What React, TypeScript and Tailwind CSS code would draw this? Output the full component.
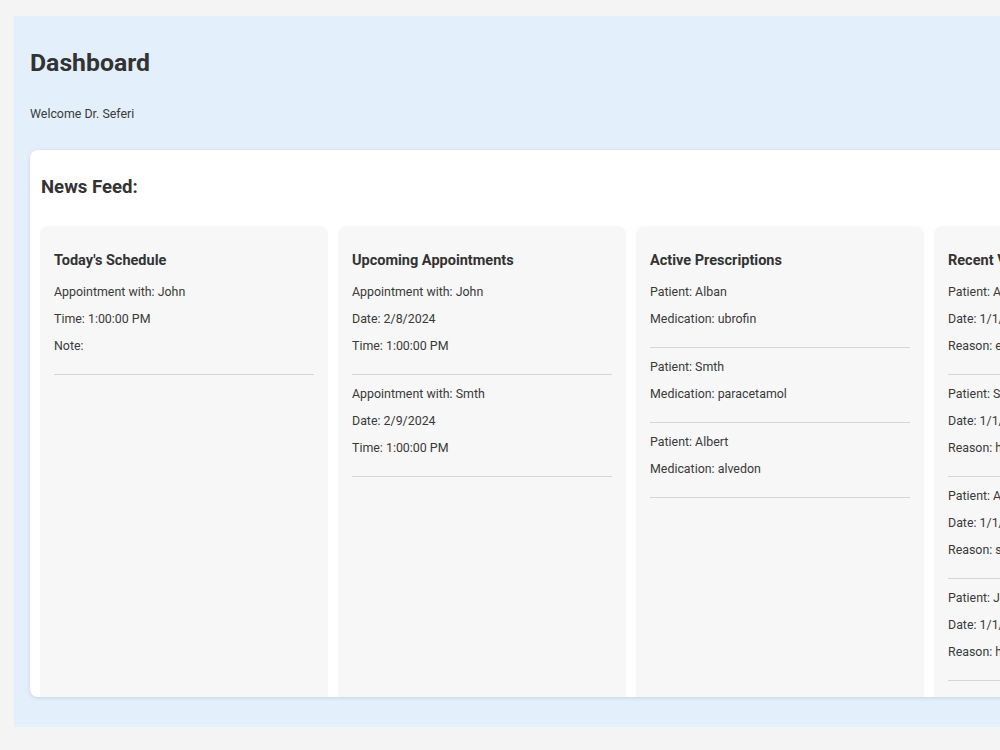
import React from "react";

type Card = { title: string; items: string[][] };

const cards: Card[] = [
  {
    title: "Today's Schedule",
    items: [["Appointment with: John", "Time: 1:00:00 PM", "Note:"]],
  },
  {
    title: "Upcoming Appointments",
    items: [
      ["Appointment with: John", "Date: 2/8/2024", "Time: 1:00:00 PM"],
      ["Appointment with: Smth", "Date: 2/9/2024", "Time: 1:00:00 PM"],
    ],
  },
  {
    title: "Active Prescriptions",
    items: [
      ["Patient: Alban", "Medication: ubrofin"],
      ["Patient: Smth", "Medication: paracetamol"],
      ["Patient: Albert", "Medication: alvedon"],
    ],
  },
  {
    title: "Recent Visits",
    items: [
      ["Patient: Alban", "Date: 1/1/2024", "Reason: examination"],
      ["Patient: Smth", "Date: 1/1/2024", "Reason: headache"],
      ["Patient: Albert", "Date: 1/1/2024", "Reason: sore throat"],
      ["Patient: John", "Date: 1/1/2024", "Reason: headache"],
    ],
  },
];

export default function App() {
  return (
    <div
      className="w-[1000px] h-[750px] overflow-hidden bg-[#f4f4f4] text-[#333333]"
      style={{ fontFamily: "Roboto, 'Noto Sans', sans-serif" }}
    >
      <div className="ml-[14px] mt-[16px] w-[1300px] h-[711px] bg-[#e3f0fc] pl-[16px] pt-[33px]">
        <h1 className="text-[24.8px] leading-[28px] font-bold">Dashboard</h1>
        <p className="mt-[29px] text-[12.4px] leading-[16px] text-[#3a3a3a]">Welcome Dr. Seferi</p>
        <div className="mt-[28px] h-[547px] w-[1250px] bg-white rounded-lg shadow-[0_1px_4px_rgba(0,0,0,0.12)] overflow-hidden pl-[10px] pt-[25px] flex flex-col">
          <h2 className="text-[18.6px] leading-[24px] font-bold pl-[1px]">News Feed:</h2>
          <div className="mt-[27px] flex gap-[10px] flex-1">
            {cards.map((c) => (
              <div
                key={c.title}
                className="w-[288px] shrink-0 bg-[#f7f7f7] rounded-t-lg px-[14px] pt-[25px]"
              >
                <h3 className="text-[14.5px] leading-[20px] font-bold mb-[13px]">{c.title}</h3>
                {c.items.map((it, i) => (
                  <div key={i} className="border-b border-[#d6d6d6] pb-[9px] mb-[11px]">
                    {it.map((l) => (
                      <p
                        key={l}
                        className="text-[12.4px] leading-[16px] mb-[11px] whitespace-nowrap text-[#3a3a3a]"
                      >
                        {l}
                      </p>
                    ))}
                  </div>
                ))}
              </div>
            ))}
          </div>
        </div>
      </div>
    </div>
  );
}
